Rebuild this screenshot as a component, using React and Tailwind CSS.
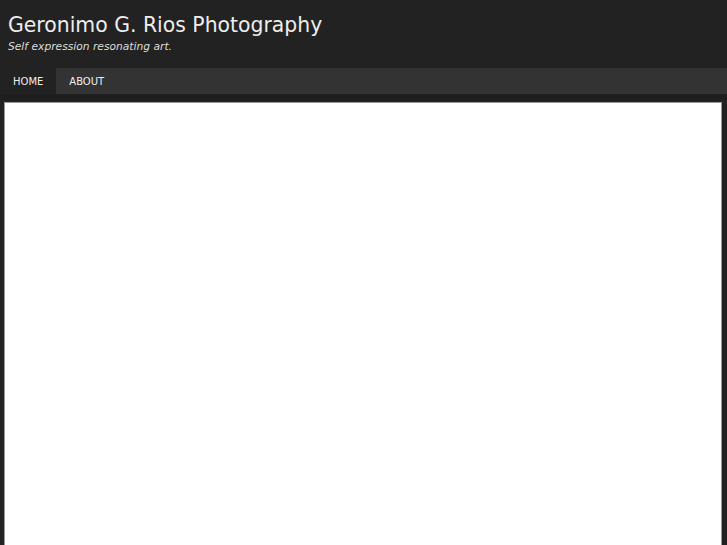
export default function App() {
  return (
    <div className="min-h-screen h-[545px] overflow-hidden bg-[#222222] font-['DejaVu_Sans',sans-serif]">
      {/* Header */}
      <div className="px-2 pt-[12px] h-[68px]">
        <h1 className="text-[20.4px] leading-[26px] text-[#eeeeee]">Geronimo G. Rios Photography</h1>
        <p className="text-[10.7px] italic text-[#dddddd] leading-[16px] mt-[1px]">Self expression resonating art.</p>
      </div>

      {/* Nav */}
      <div className="flex h-[26px] bg-[#333333] text-[10px] text-[#eeeeee]">
        <a className="flex items-center px-[13px] bg-[#222222]">HOME</a>
        <a className="flex items-center px-[13px]">ABOUT</a>
      </div>
      <div className="h-[6px] bg-[#1e1e1e]" />

      {/* Content */}
      <div className="mx-1 mr-[5px] mt-[2px] h-[500px] bg-white border border-[#999999]" />
    </div>
  );
}
